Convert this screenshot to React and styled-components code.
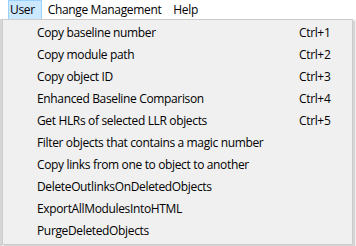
import React from 'react';
import styled, { createGlobalStyle } from 'styled-components';

const GlobalStyle = createGlobalStyle`
  html, body {
    margin: 0;
    padding: 0;
    background: #ffffff;
  }
  body {
    font-family: "Open Sans", "Noto Sans", sans-serif;
    font-size: 12px;
    letter-spacing: -0.35px;
    color: #000;
  }
`;

const menuItems = [
  { label: 'Copy baseline number', shortcut: 'Ctrl+1' },
  { label: 'Copy module path', shortcut: 'Ctrl+2' },
  { label: 'Copy object ID', shortcut: 'Ctrl+3' },
  { label: 'Enhanced Baseline Comparison', shortcut: 'Ctrl+4' },
  { label: 'Get HLRs of selected LLR objects', shortcut: 'Ctrl+5' },
  { label: 'Filter objects that contains a magic number' },
  { label: 'Copy links from one to object to another' },
  { label: 'DeleteOutlinksOnDeletedObjects' },
  { label: 'ExportAllModulesIntoHTML' },
  { label: 'PurgeDeletedObjects' },
];

class App extends React.Component {
  render () {
    return (
      <Screen>
        <GlobalStyle />
        <MenuBar>
          <TopItem active>User</TopItem>
          <TopItem>Change Management</TopItem>
          <TopItem>Help</TopItem>
        </MenuBar>
        <Workspace>
          <LeftStrip />
          <Dropdown>
            {menuItems.map((item) => (
              <Row key={item.label}>
                <Label>{item.label}</Label>
                <Shortcut>{item.shortcut || ''}</Shortcut>
              </Row>
            ))}
          </Dropdown>
        </Workspace>
      </Screen>
    );
  }
}

const Screen = styled.div`
  width: 356px;
  height: 246px;
  overflow: hidden;
  display: flex;
  flex-direction: column;
`;

const MenuBar = styled.div`
  height: 19px;
  display: flex;
  align-items: stretch;
  background: #ffffff;
  padding-left: 8px;
`;

const TopItem = styled.div`
  display: flex;
  align-items: center;
  padding: 0 5px 1px 5px;
  box-sizing: border-box;
  line-height: 16px;
  background: ${(props) => (props.active ? '#cce8ff' : 'transparent')};
  border: 1px solid ${(props) => (props.active ? '#99d1ff' : 'transparent')};
  border-bottom: none;
  &:first-child {
    padding-left: 1px;
    padding-right: 6px;
  }
`;

const Workspace = styled.div`
  position: relative;
  flex: 1;
  background: #f4f4f4;
`;

const LeftStrip = styled.div`
  width: 2px;
  height: 100%;
  background: #d6d6d6;
`;

const Dropdown = styled.div`
  position: absolute;
  left: 2px;
  top: 0;
  width: 351px;
  box-sizing: border-box;
  background: #f0f0f0;
  border: 1px solid #cccccc;
  padding: 1px 2px 3px 2px;
  box-shadow: 2px 2px 1px rgba(0, 0, 0, 0.12);
`;

const Row = styled.div`
  height: 22px;
  display: flex;
  align-items: center;
  padding-left: 32px;
  padding-right: 17px;
`;

const Label = styled.span`
  flex: 1;
  white-space: nowrap;
`;

const Shortcut = styled.span`
  width: 34px;
  white-space: nowrap;
`;

export default App;
